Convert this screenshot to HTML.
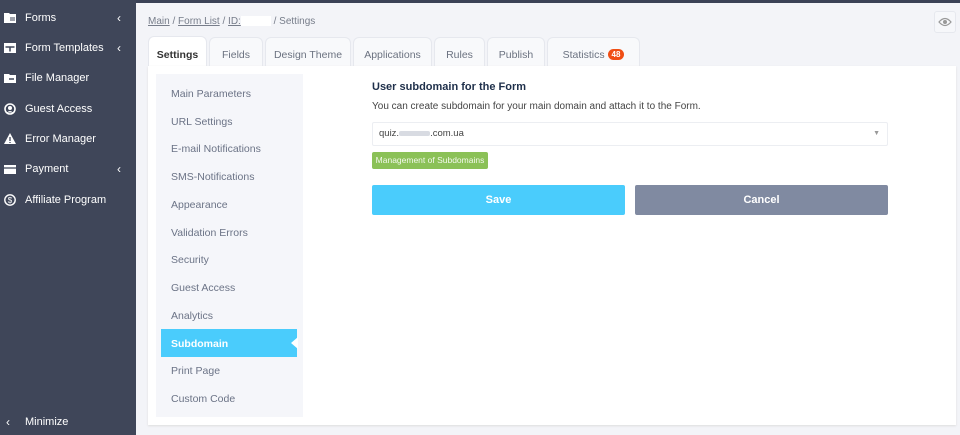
<!DOCTYPE html>
<html><head><style>
*{box-sizing:border-box;margin:0;padding:0}
body{width:960px;height:435px;overflow:hidden;background:#f3f4f8;font-family:"Liberation Sans",sans-serif;position:relative}
.top{position:absolute;left:0;top:0;width:960px;height:3px;background:#3b4256}
.side{position:absolute;left:0;top:0;width:136px;height:435px;background:#3f4659;color:#fff;font-size:11px}
.si{position:absolute;left:0;height:20px;width:136px;line-height:20px}
.si .ic{position:absolute;left:4px;top:4px;width:12px;height:12px}
.si .t{position:absolute;left:25px}
.si .ch{position:absolute;left:117px;font-size:12px}
.crumb{position:absolute;left:148px;top:16px;font-size:10px;color:#777d8a}
.crumb u{text-decoration:underline}
.tab{position:absolute;top:37px;height:30px;background:#f8f9fb;border:1px solid #e6e8ee;border-bottom:none;border-radius:6px 6px 0 0;font-size:10.5px;color:#6b7280;text-align:center;line-height:34px}
.card{position:absolute;left:148px;top:66px;width:808px;height:359px;background:#fff;box-shadow:0 1px 2px #ddd}
.menu{position:absolute;left:156px;top:74px;width:147px;height:343px;background:#f5f6fa}
.mi{position:absolute;left:171px;font-size:10.5px;color:#6b7386}
.act{position:absolute;left:161px;top:329px;width:136px;height:28px;background:#4accfc}
</style></head><body>
<div class="top"></div>
<div class="side">
<div class="si" style="top:8px"><svg class="ic" viewBox="0 0 12 12"><path d="M0 1h5l1 1h6v9H0z" fill="#fff"/><path d="M6 6h5M6 8h5" stroke="#3f4659"/></svg><span class="t">Forms</span><span class="ch">‹</span></div>
<div class="si" style="top:38px"><svg class="ic" viewBox="0 0 12 12"><rect x="0" y="1" width="12" height="10" fill="#fff"/><path d="M1.5 5h9M6 5v4.5" stroke="#3f4659" stroke-width="1.5"/></svg><span class="t">Form Templates</span><span class="ch">‹</span></div>
<div class="si" style="top:68px"><svg class="ic" viewBox="0 0 12 12"><path d="M0 2h5l1 1h6v8H0z" fill="#fff"/><path d="M5 7h5" stroke="#3f4659" stroke-width="1.5"/></svg><span class="t">File Manager</span></div>
<div class="si" style="top:99px"><svg class="ic" viewBox="0 0 12 12"><circle cx="6" cy="6" r="5" fill="none" stroke="#fff" stroke-width="1.6"/><circle cx="6" cy="5" r="2" fill="#fff"/><path d="M3 9.5q3-3 6 0" fill="#fff"/></svg><span class="t">Guest Access</span></div>
<div class="si" style="top:129px"><svg class="ic" viewBox="0 0 12 12"><path d="M6 0L12 11H0z" fill="#fff"/><path d="M6 4v4M6 9v1" stroke="#3f4659" stroke-width="1.3"/></svg><span class="t">Error Manager</span></div>
<div class="si" style="top:159px"><svg class="ic" viewBox="0 0 12 12"><rect x="0" y="2" width="12" height="9" fill="#fff"/><path d="M0 5h12" stroke="#3f4659" stroke-width="1.3"/></svg><span class="t">Payment</span><span class="ch">‹</span></div>
<div class="si" style="top:190px"><svg class="ic" viewBox="0 0 12 12"><circle cx="6" cy="6" r="5.2" fill="none" stroke="#fff" stroke-width="1.4"/><text x="6" y="9" font-size="8" text-anchor="middle" fill="#fff" font-family="Liberation Sans">$</text></svg><span class="t">Affiliate Program</span></div>
<div class="si" style="top:412px"><span style="position:absolute;left:6px;font-size:12px">‹</span><span class="t">Minimize</span></div>
</div>
<div class="crumb"><u>Main</u> / <u>Form List</u> / <u>ID:</u><span style="display:inline-block;width:30px;height:10px;background:#fff;vertical-align:middle"></span> / Settings</div>
<div style="position:absolute;left:934px;top:11px;width:22px;height:22px;border:1px solid #e6e8ee;border-radius:3px;background:#f6f7fa"><svg width="20" height="20" viewBox="0 0 20 20"><path d="M4 10q6-7 12 0q-6 7-12 0z" fill="none" stroke="#999" stroke-width="1.2"/><circle cx="10" cy="10" r="2" fill="#999"/></svg></div>
<div class="tab" style="left:148px;width:59px;background:#fff;color:#333;font-weight:bold;height:32px;top:36px;line-height:36px">Settings</div>
<div class="tab" style="left:209px;width:54px">Fields</div>
<div class="tab" style="left:265px;width:86px">Design Theme</div>
<div class="tab" style="left:353px;width:79px">Applications</div>
<div class="tab" style="left:434px;width:51px">Rules</div>
<div class="tab" style="left:487px;width:58px">Publish</div>
<div class="tab" style="left:547px;width:93px">Statistics <span style="display:inline-block;background:#f04e14;color:#fff;border-radius:8px;font-size:8px;line-height:11px;padding:0 4px;font-weight:bold;vertical-align:1px">48</span></div>
<div class="card"></div>
<div class="menu"></div>
<div class="act"></div>
<svg style="position:absolute;left:291px;top:337px" width="7" height="12"><path d="M7 0L0 6L7 12z" fill="#fff"/></svg>
<div class="mi" style="top:88px">Main Parameters</div>
<div class="mi" style="top:116px">URL Settings</div>
<div class="mi" style="top:143px">E-mail Notifications</div>
<div class="mi" style="top:171px">SMS-Notifications</div>
<div class="mi" style="top:199px">Appearance</div>
<div class="mi" style="top:227px">Validation Errors</div>
<div class="mi" style="top:254px">Security</div>
<div class="mi" style="top:282px">Guest Access</div>
<div class="mi" style="top:310px">Analytics</div>
<div class="mi" style="top:338px;color:#fff;font-weight:bold">Subdomain</div>
<div class="mi" style="top:365px">Print Page</div>
<div class="mi" style="top:393px">Custom Code</div>
<div style="position:absolute;left:372px;top:81px;font-size:11px;font-weight:bold;color:#1e2f4a">User subdomain for the Form</div>
<div style="position:absolute;left:372px;top:101px;font-size:10px;color:#444">You can create subdomain for your main domain and attach it to the Form.</div>
<div style="position:absolute;left:372px;top:122px;width:516px;height:24px;border:1px solid #eceef2;border-radius:2px;font-size:9.5px;color:#444;line-height:22px;padding-left:6px">quiz.<span style="display:inline-block;width:31px;height:5px;background:#d8dbe2;vertical-align:middle;border-radius:2px"></span>.com.ua<span style="position:absolute;right:7px;top:0;color:#999;font-size:7px">▼</span></div>
<div style="position:absolute;left:372px;top:152px;width:116px;height:17px;background:#8bc157;border-radius:2px;color:#f3f8ec;font-size:8.5px;text-align:center;line-height:17px">Management of Subdomains</div>
<div style="position:absolute;left:372px;top:185px;width:253px;height:30px;background:#4accfc;border-radius:2px;color:#fff;font-size:11px;font-weight:bold;text-align:center;line-height:31px">Save</div>
<div style="position:absolute;left:635px;top:185px;width:253px;height:30px;background:#808aa1;border-radius:2px;color:#fff;font-size:11px;font-weight:bold;text-align:center;line-height:31px">Cancel</div>
</body></html>
